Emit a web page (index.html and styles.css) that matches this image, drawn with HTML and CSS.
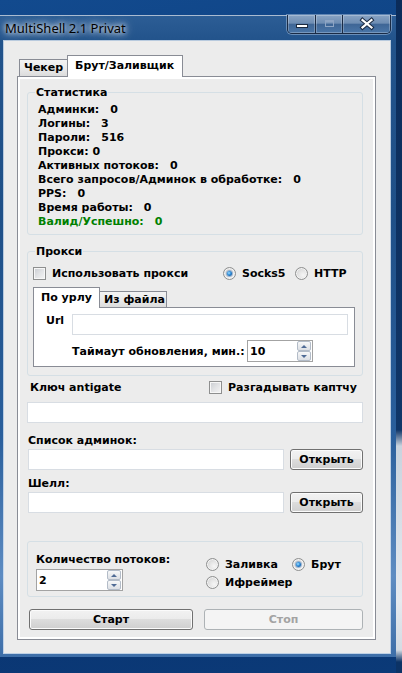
FILE: index.html
```html
<!DOCTYPE html>
<html lang="ru">
<head>
<meta charset="utf-8">
<title>MultiShell 2.1 Privat</title>
<link rel="stylesheet" href="styles.css">
</head>
<body>
<div class="screen">
  <div class="window">
    <div class="titlebar">
      <div class="title">MultiShell 2.1 Privat</div>
      <div class="capbtns">
        <div class="capbtn cmin"><svg width="27" height="18" viewBox="0 0 27 18"><rect x="8.5" y="9.5" width="11" height="3" fill="#fff" stroke="#1b2a40" stroke-width="1"/></svg></div>
        <div class="capbtn cmax"><svg width="27" height="18" viewBox="0 0 27 18"><rect x="9.5" y="5.5" width="8" height="6" fill="none" stroke="#8ea5c4" stroke-width="1"/><rect x="9.5" y="5.5" width="8" height="2" fill="#8ea5c4"/></svg></div>
        <div class="capbtn cclose"><svg width="46" height="18" viewBox="0 0 46 18"><path d="M19.5 5 L28.5 12.5 M28.5 5 L19.5 12.5" stroke="#1b2a40" stroke-width="4.2" stroke-linecap="square"/><path d="M19.5 5 L28.5 12.5 M28.5 5 L19.5 12.5" stroke="#fff" stroke-width="2.2" stroke-linecap="square"/></svg></div>
      </div>
    </div>
    <div class="client">
      <div class="tabs">
        <div class="tab">Чекер</div>
        <div class="tab active">Брут/Заливщик</div>
      </div>
      <div class="tabpanel">
        <div class="group stats">
          <div class="gcap">Статистика</div>
          <div class="sl">Админки:<span class="v">0</span></div>
          <div class="sl">Логины:<span class="v">3</span></div>
          <div class="sl">Пароли:<span class="v">516</span></div>
          <div class="sl">Прокси: 0</div>
          <div class="sl">Активных потоков:<span class="v">0</span></div>
          <div class="sl">Всего запросов/Админок в обработке:<span class="v">0</span></div>
          <div class="sl">PPS:<span class="v">0</span></div>
          <div class="sl">Время работы:<span class="v">0</span></div>
          <div class="sl green">Валид/Успешно:<span class="v">0</span></div>
        </div>
        <div class="group proxy">
          <div class="gcap">Прокси</div>
          <div class="prow">
            <div class="opt w-useproxy"><span class="cb"></span><span>Использовать прокси</span></div>
            <div class="opt w-socks"><span class="rb on"><i></i></span><span>Socks5</span></div>
            <div class="opt"><span class="rb"></span><span>HTTP</span></div>
          </div>
          <div class="itabs">
            <div class="itab active">По урлу</div>
            <div class="itab">Из файла</div>
          </div>
          <div class="ipanel">
            <div class="urlrow"><div class="urllbl">Url</div><div class="tb urltb"></div></div>
            <div class="torow">
              <div class="tolbl">Таймаут обновления, мин.:</div>
              <div class="nud nud-to"><span class="nv">10</span><div class="spin"><span class="sp"><i class="up"></i></span><span class="sp"><i class="dn"></i></span></div></div>
            </div>
          </div>
        </div>
        <div class="agrow">
          <div class="aglbl">Ключ antigate</div>
          <div class="opt"><span class="cb"></span><span>Разгадывать каптчу</span></div>
        </div>
        <div class="tb agtb"></div>
        <div class="flbl">Список админок:</div>
        <div class="frow"><div class="tb ftb"></div><div class="btn fbtn">Открыть</div></div>
        <div class="flbl shell">Шелл:</div>
        <div class="frow"><div class="tb ftb"></div><div class="btn fbtn">Открыть</div></div>
        <div class="group threads">
          <div class="tcol">
            <div class="tlbl">Количество потоков:</div>
            <div class="nud nud-th"><span class="nv">2</span><div class="spin"><span class="sp"><i class="up"></i></span><span class="sp"><i class="dn"></i></span></div></div>
          </div>
          <div class="mcol">
            <div class="mrow">
              <div class="opt w-zal"><span class="rb"></span><span>Заливка</span></div>
              <div class="opt"><span class="rb on"><i></i></span><span>Брут</span></div>
            </div>
            <div class="mrow r2">
              <div class="opt"><span class="rb"></span><span>Ифреймер</span></div>
            </div>
          </div>
        </div>
        <div class="brow">
          <div class="btn start">Старт</div>
          <div class="btn stop">Стоп</div>
        </div>
      </div>
    </div>
  </div>
  <div class="behind"></div>
</div>
</body>
</html>
```

FILE: styles.css
```css
* { box-sizing: border-box; }
html, body { margin: 0; padding: 0; }
body {
  width: 402px;
  height: 673px;
  overflow: hidden;
  font-family: "DejaVu Sans", sans-serif;
  font-weight: bold;
  font-size: 11px;
  color: #000;
}
.screen {
  display: flex;
  width: 402px;
  height: 673px;
  background: linear-gradient(170deg, #124a8e 0%, #0c3b78 40%, #0a3470 75%, #0b3a78 100%);
}
.window {
  flex: none;
  margin-top: 15px;
  width: 396px;
  height: 642px;
  display: flex;
  flex-direction: column;
  border-top: 1px solid #a9bbd1;
  background: linear-gradient(180deg, #2c5d95 0px, #22538b 25px, #1f5088 200px, #2a5f9c 420px, #5e8cc2 560px, #3d6ea8 642px);
}
.titlebar {
  height: 25px;
  display: flex;
  justify-content: space-between;
  align-items: flex-start;
}
.title {
  margin: 4px 0 0 -1px;
  padding: 0 6px;
  font-family: "Noto Sans", "Open Sans", sans-serif;
  font-weight: normal;
  font-size: 13px;
  line-height: 17px;
  color: #000;
  text-shadow: 0 0 5px #fff, 0 0 9px rgba(255,255,255,.85), 0 0 14px rgba(255,255,255,.6);
}
.capbtns {
  display: flex;
  margin-top: -1px;
  margin-right: 5px;
  height: 19px;
  border: 1px solid #1a2b45;
  border-top: none;
  border-radius: 0 0 5px 5px;
  overflow: hidden;
  box-shadow: 0 0 0 1px rgba(190, 210, 235, .45);
}
.capbtn {
  height: 18px;
  background: linear-gradient(180deg, #88a3c4 0%, #6f8eb3 45%, #3f6696 52%, #4a76a8 100%);
  box-shadow: inset 0 0 0 1px rgba(255,255,255,.25);
}
.capbtn svg { display: block; }
.cmin { width: 28px; border-right: 1px solid #1a2b45; }
.cmax { width: 27px; border-right: 1px solid #1a2b45; }
.cclose { width: 47px; }

.client {
  margin: 0 6px 0 4px;
  height: 612px;
  background: #ececec;
  padding: 14px 0 0 13px;
  box-shadow: 0 0 0 1px rgba(235, 242, 250, .75);
}

/* main tabs */
.tabs {
  display: flex;
  align-items: flex-end;
  height: 22px;
  padding-left: 2px;
}
.tab {
  height: 18px;
  width: 49px;
  border: 1px solid #898c95;
  background: linear-gradient(180deg, #f3f3f3 0%, #ebebeb 50%, #dcdcdc 100%);
  padding: 1px 0 0 4px;
  line-height: 13px;
  white-space: nowrap;
}
.tab.active {
  position: relative;
  z-index: 1;
  height: 22px;
  width: 116px;
  margin-left: -1px;
  border-bottom: none;
  background: #fff;
  padding: 3px 0 0 7px;
}
.tabpanel {
  margin-top: -1px;
  width: 359px;
  height: 564px;
  border: 1px solid #898c95;
  box-shadow: inset 0 0 0 2px #fff;
}

/* group boxes */
.group {
  position: relative;
  width: 336px;
  margin-left: 9px;
  border: 1px solid #d5dfe5;
  border-radius: 3px;
}
.gcap {
  position: absolute;
  top: -7px;
  left: 7px;
  padding: 0 1px;
  line-height: 13px;
  background: #ececec;
}
.stats {
  margin-top: 15px;
  height: 143px;
  padding: 10px 0 0 10px;
}
.sl {
  line-height: 14px;
  white-space: nowrap;
}
.sl .v { margin-left: 11px; }
.green { color: #008000; }

.proxy {
  margin-top: 16px;
  height: 125px;
  padding: 15px 0 0 5px;
}
.prow {
  display: flex;
  align-items: center;
  height: 13px;
}
.opt {
  display: flex;
  align-items: center;
  gap: 6px;
  line-height: 13px;
  white-space: nowrap;
}
.w-useproxy { width: 190px; }
.w-socks { width: 72px; }

/* checkbox and radio */
.cb {
  flex: none;
  width: 13px;
  height: 13px;
  border: 1px solid #8e8f8f;
  background: linear-gradient(135deg, #c9ccd1 0%, #e2e3e5 50%, #f5f5f5 100%);
  box-shadow: inset 0 0 0 1px #f7f7f7;
}
.rb {
  flex: none;
  width: 13px;
  height: 13px;
  border-radius: 50%;
  border: 1px solid #8e8f8f;
  background: radial-gradient(circle at 65% 65%, #f6f6f6 0%, #e4e4e4 45%, #c9c9c9 100%);
  box-shadow: inset 0 0 0 1px #f4f4f4;
}
.rb.on {
  display: flex;
  align-items: center;
  justify-content: center;
}
.rb.on i {
  display: block;
  width: 5px;
  height: 5px;
  border-radius: 50%;
  background: radial-gradient(circle at 40% 40%, #a6e1ff 0%, #2a8ad8 45%, #0e3f7c 100%);
  box-shadow: 0 0 0 1px rgba(60, 110, 170, .45);
}

/* inner tabs */
.itabs {
  display: flex;
  align-items: flex-end;
  height: 21px;
  margin-top: 7px;
}
.itab {
  height: 17px;
  width: 68px;
  margin-left: -1px;
  border: 1px solid #898c95;
  background: linear-gradient(180deg, #f3f3f3 0%, #ebebeb 50%, #dcdcdc 100%);
  padding: 1px 0 0 4px;
  line-height: 13px;
  white-space: nowrap;
}
.itab.active {
  position: relative;
  z-index: 1;
  height: 21px;
  width: 67px;
  margin-left: 0;
  border-bottom: none;
  background: #fff;
  padding: 3px 0 0 7px;
}
.ipanel {
  margin-top: -1px;
  width: 322px;
  height: 60px;
  border: 1px solid #898c95;
  background: #fff;
  padding: 6px 0 0 12px;
}
.urlrow { display: flex; }
.urllbl { width: 26px; line-height: 13px; }
.tb {
  height: 21px;
  border: 1px solid #d8dde3;
  background: #fff;
}
.urltb { width: 276px; }
.torow {
  display: flex;
  align-items: baseline;
  margin-top: 5px;
  padding-left: 26px;
}
.tolbl { width: 175px; line-height: 13px; white-space: nowrap; }

/* numeric up-down */
.nud {
  display: flex;
  align-items: center;
  height: 22px;
  border: 1px solid #a3a3a3;
  background: #fff;
  padding-left: 2px;
  line-height: 13px;
}
.nv { flex: 1; }
.nud-to { width: 66px; }
.nud-th { width: 87px; margin-top: 3px; }
.spin {
  display: flex;
  flex-direction: column;
  margin-right: 1px;
}
.sp {
  display: flex;
  align-items: center;
  justify-content: center;
  width: 14px;
  height: 10px;
  border: 1px solid #b3bcc8;
  border-radius: 2px;
  background: linear-gradient(180deg, #f7f8f9 0%, #e9ebee 50%, #dde0e5 100%);
}
.sp i { display: block; width: 0; height: 0; border-left: 3px solid transparent; border-right: 3px solid transparent; }
.sp i.up { border-bottom: 3px solid #4f6b95; }
.sp i.dn { border-top: 3px solid #4f6b95; }

/* antigate + file rows */
.agrow {
  display: flex;
  align-items: center;
  height: 13px;
  margin-top: 5px;
  padding-left: 12px;
}
.aglbl { width: 179px; line-height: 13px; }
.agtb { width: 336px; margin: 8px 0 0 9px; }
.flbl {
  margin-top: 11px;
  padding-left: 10px;
  line-height: 13px;
}
.flbl.shell { margin-top: 7px; }
.frow {
  display: flex;
  gap: 6px;
  margin: 2px 0 0 10px;
}
.ftb { width: 256px; }

/* buttons */
.btn {
  display: flex;
  align-items: center;
  justify-content: center;
  height: 21px;
  border: 1px solid #707070;
  border-radius: 3px;
  background: linear-gradient(180deg, #f2f2f2 0%, #ebebeb 49%, #dddddd 50%, #cfcfcf 100%);
  box-shadow: inset 0 0 0 1px #fbfbfb;
  line-height: 13px;
  white-space: nowrap;
}
.fbtn { width: 73px; }

/* threads */
.threads {
  display: flex;
  margin-top: 28px;
  height: 56px;
}
.tcol { width: 178px; padding: 11px 0 0 8px; }
.tlbl { line-height: 13px; white-space: nowrap; }
.mcol { padding-top: 16px; }
.mrow { display: flex; align-items: center; height: 13px; }
.mrow.r2 { margin-top: 5px; }
.w-zal { width: 86px; }

.brow {
  display: flex;
  gap: 11px;
  margin: 12px 0 0 11px;
}
.start { width: 164px; }
.stop {
  width: 159px;
  border-color: #adb2b5;
  background: #f4f4f4;
  box-shadow: none;
  color: #a3a3a3;
}

.behind {
  flex: none;
  width: 6px;
  height: 673px;
  background: linear-gradient(180deg, #0b2c5a 0px, #103668 430px, #c9d3de 446px, #e6eaef 600px, #d4dbe3 650px, #0c3366 662px);
}
```
